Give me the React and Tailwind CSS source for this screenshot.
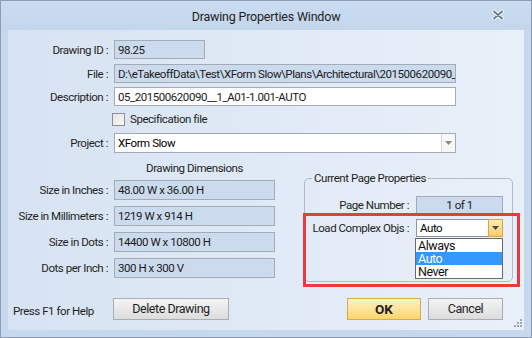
import React from "react";

const font = { fontFamily: "Roboto, 'Liberation Sans', sans-serif" };

function Field({ w, children, ro = true, center = false, h = "h-[19px]" }) {
  return (
    <div
      className={`${w} ${h} border border-[#a3abb6] ${ro ? "bg-[#ccdaee]" : "bg-white"} flex items-center px-[3px] overflow-hidden whitespace-nowrap text-[#1a1a1a] ${center ? "justify-center" : ""}`}
    >
      {children}
    </div>
  );
}

function Row({ label, children, className = "" }) {
  return (
    <div className={`flex items-center ${className}`}>
      <div className="w-[101px] text-right pr-[1px] text-[#1e1e1e] whitespace-nowrap">{label}</div>
      <div className="ml-[5px]">{children}</div>
    </div>
  );
}

function Arrow({ color = "#505050" }) {
  return (
    <svg width="7" height="4" viewBox="0 0 7 4">
      <path d="M0 0 H7 L3.5 4 Z" fill={color} />
    </svg>
  );
}

export default function App() {
  return (
    <div
      style={font}
      className="w-[532px] h-[338px] bg-[#c6d8ee] border border-[#8d9cb0] flex flex-col text-[11.5px] tracking-[-0.45px] leading-[14px] select-none"
    >
      {/* title bar */}
      <div className="h-[29px] relative flex items-center justify-center bg-linear-to-b from-[#cadcf1] to-[#c3d6ec]">
        <span className="text-[12.5px] tracking-[-0.2px] text-[#222] pt-[2px]">Drawing Properties Window</span>
        <div className="absolute right-[27px] top-[9px]">
          <svg width="12" height="10" viewBox="0 0 12 10">
            <path d="M2 1.5 L10 8.5 M10 1.5 L2 8.5" stroke="#f4f8fc" strokeWidth="4" strokeLinecap="round" />
            <path d="M2 1.5 L10 8.5 M10 1.5 L2 8.5" stroke="#6f8097" strokeWidth="2" strokeLinecap="round" />
          </svg>
        </div>
      </div>

      {/* client area */}
      <div className="mx-[7px] h-[300px] relative bg-linear-to-r from-[#d7e3f3] to-[#e9f0f9] flex flex-col pt-[10px]">
        <Row label="Drawing ID :">
          <Field w="w-[91px]">98.25</Field>
        </Row>
        <Row label="File :" className="mt-[5px]">
          <Field w="w-[342px]">D:\eTakeoffData\Test\XForm Slow\Plans\Architectural\201500620090__1_A01-1.001-AUTO.pdf</Field>
        </Row>
        <Row label="Description :" className="mt-[4px]">
          <Field w="w-[342px]" ro={false}>05_201500620090__1_A01-1.001-AUTO</Field>
        </Row>
        <div className="flex items-center mt-[6px] ml-[104px]">
          <div className="w-[13px] h-[13px] border border-[#8e8f8f] bg-linear-to-br from-[#e4e4e4] to-[#f8f8f8]" />
          <span className="ml-[5px] text-[#1e1e1e]">Specification file</span>
        </div>
        <Row label="Project :" className="mt-[7px]">
          <div className="w-[342px] h-[20px] border border-[#a3abb6] bg-white flex items-center">
            <span className="flex-1 px-[3px]">XForm Slow</span>
            <div className="w-[14px] h-full border-l border-[#d9d9d9] bg-[#f7f7f7] flex items-center justify-center">
              <Arrow color="#8a8a8a" />
            </div>
          </div>
        </Row>

        {/* middle */}
        <div className="flex h-[129px]">
          <div className="flex flex-col">
            <div className="h-[27px] flex items-center justify-center pl-[106px] pt-[3px]">
              <span className="text-[#1e1e1e]">Drawing Dimensions</span>
            </div>
            <Row label="Size in Inches :">
              <Field w="w-[161px]" h="h-[20px]">48.00 W x 36.00 H</Field>
            </Row>
            <Row label="Size in Millimeters :" className="mt-[6px]">
              <Field w="w-[161px]" h="h-[20px]">1219 W x 914 H</Field>
            </Row>
            <Row label="Size in Dots :" className="mt-[6px]">
              <Field w="w-[161px]" h="h-[20px]">14400 W x 10800 H</Field>
            </Row>
            <Row label="Dots per Inch :" className="mt-[6px]">
              <Field w="w-[161px]" h="h-[20px]">300 H x 300 V</Field>
            </Row>
          </div>

          <fieldset className="ml-[29px] mt-[18px] w-[209px] h-[111px] border border-[#b1bccb] rounded-[5px] px-0 pb-0">
            <legend className="ml-[7px] px-[2px] text-[#1e1e1e]">Current Page Properties</legend>
            <div className="flex items-center mt-[11px]">
              <div className="w-[104px] text-right text-[#1e1e1e]">Page Number :</div>
              <div className="ml-[7px]">
                <Field w="w-[87px]" h="h-[18px]" center>1 of 1</Field>
              </div>
            </div>
            <div className="flex items-center mt-[5px]">
              <div className="w-[104px] text-right text-[#1e1e1e] whitespace-nowrap">Load Complex Objs :</div>
              <div className="ml-[7px] w-[87px] h-[18px] border border-[#8c96a3] bg-white flex items-center">
                <span className="flex-1 px-[3px]">Auto</span>
                <div className="w-[15px] h-[18px] -my-px -mr-px border border-[#e1a43c] bg-linear-to-b from-[#feeeb6] to-[#f8cd66] flex items-center justify-center">
                  <Arrow color="#4a4a4a" />
                </div>
              </div>
            </div>
          </fieldset>
        </div>

        {/* bottom buttons */}
        <div className="flex items-center mt-[16px] h-[22px] pl-[5px]">
          <span className="w-[100px] text-[#1e1e1e] pt-[4px]">Press F1 for Help</span>
          <button className="w-[116px] h-[22px] border border-[#a9aeb5] bg-linear-to-b from-[#f4f4f4] to-[#dcdcdc] text-[12.5px] text-[#1e1e1e]">
            Delete Drawing
          </button>
          <button className="ml-[118px] w-[74px] h-[22px] border border-[#d8ab49] bg-linear-to-b from-[#fff1c4] to-[#fbd66d] font-bold text-[13.5px] tracking-normal text-[#1e1e1e]">
            OK
          </button>
          <button className="ml-[7px] w-[75px] h-[22px] border border-[#a9aeb5] bg-linear-to-b from-[#f4f4f4] to-[#dcdcdc] text-[12.5px] text-[#1e1e1e]">
            Cancel
          </button>
        </div>

        {/* dropdown list overlay */}
        <div className="absolute left-[407px] top-[208px] w-[88px] h-[41px] border border-[#6a6a6a] bg-white flex flex-col text-[12.5px] leading-[13px] text-[#111]">
          <div className="px-[2px] h-[13px] overflow-hidden">Always</div>
          <div className="px-[2px] h-[13px] overflow-hidden bg-[#3399ff] text-white">Auto</div>
          <div className="px-[2px] h-[13px] overflow-hidden">Never</div>
        </div>

        {/* red highlight overlay */}
        <div className="absolute left-[295px] top-[183px] w-[217px] h-[74px] border-[3px] border-[#ea3a3c]" />

        {/* resize grip */}
        <svg className="absolute right-[1px] bottom-[1px]" width="10" height="10" viewBox="0 0 10 10">
          {[[7, 0], [4, 3], [7, 3], [1, 6], [4, 6], [7, 6]].map(([x, y], i) => (
            <rect key={i} x={x} y={y} width="2" height="2" fill="#9aa6b6" />
          ))}
        </svg>
      </div>
    </div>
  );
}
